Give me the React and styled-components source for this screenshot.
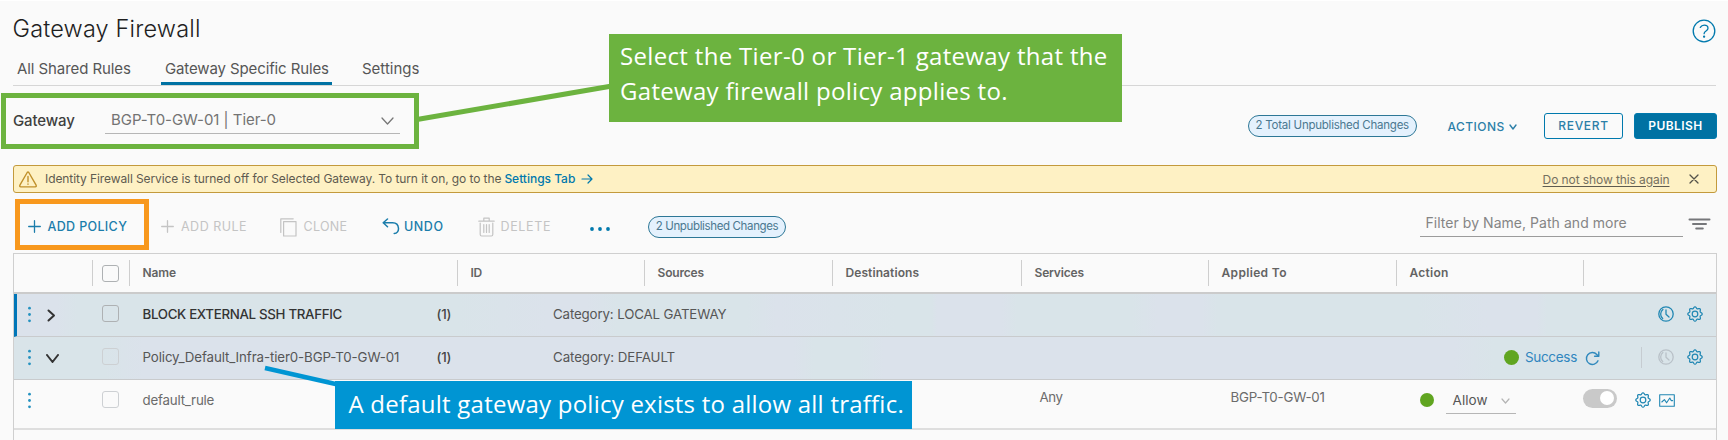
import React from 'react';
import styled, { createGlobalStyle } from 'styled-components';

const blue = '#0079ad';
const GlobalStyle = createGlobalStyle`
  *, *::before, *::after { box-sizing: border-box; }
  body { margin: 0; background: #fafafa; font-family: Inter, "Liberation Sans", sans-serif; color: #565656; overflow: hidden; }
  svg { display: block; flex: none; }
  button { font: inherit; background: none; border: 0; padding: 0; margin: 0; }
`;

const Page = styled.main`
  position: relative;
  width: 1728px;
  height: 440px;
  overflow: hidden;
  border-top: 1px solid #fff;
  padding: 0 11px 0 13px;
  display: flex;
  flex-direction: column;
`;
const Text = styled.span`
  font-size: ${p => p.$size || 13.3}px;
  font-weight: ${p => p.$weight || 400};
  letter-spacing: ${p => p.$ls || 0}px;
  line-height: 20px;
  margin: ${p => p.$margin || 0};
  color: ${p => p.$color || 'inherit'};
  white-space: pre;
`;
const Header = styled.header`
  display: flex;
  justify-content: space-between;
  align-items: flex-start;
  height: 56px;
`;
const Title = styled.h1`
  margin: 12px 0 0 -0.5px;
  font-size: 23.5px;
  font-weight: 300;
  letter-spacing: 0.17px;
  line-height: 31px;
  color: #1f1f1f;
`;
const HelpButton = styled.button`
  margin: 18px 1px 0 0;
`;
const Tabs = styled.nav`
  display: flex;
  height: 29px;
  width: 1703px;
  border-bottom: 1px solid #d6d6d6;
`;
const Tab = styled.div`
  width: ${p => p.$width}px;
  margin-left: ${p => p.$gap}px;
  height: 28px;
  padding: 1px 0 0 4px;
  border-bottom: 3px solid ${p => (p.$active ? '#0072a3' : 'transparent')};
`;
const GatewayBar = styled.section`
  display: flex;
  height: 79px;
`;
const GatewayLabel = styled.label`
  width: 92px;
  padding-top: 24px;
  line-height: 20px;
`;
const Select = styled.div`
  display: flex;
  justify-content: space-between;
  align-items: flex-start;
  width: ${p => p.$width}px;
  height: ${p => p.$height}px;
  padding: ${p => p.$pad};
  border-bottom: 1px solid #b6b6b6;
`;
const SelectCaret = styled.div`
  padding-top: ${p => p.$drop}px;
`;
const PublishActions = styled.div`
  display: flex;
  align-items: center;
  height: 26px;
  margin: 27px 0 0 auto;
`;
const Badge = styled.div`
  display: flex;
  align-items: center;
  justify-content: center;
  width: ${p => p.$width}px;
  height: 22px;
  padding-bottom: 2px;
  border: 1px solid #2d7796;
  border-radius: 11px;
  background: #e4f1fd;
  color: #4b7890;
`;
const MenuButton = styled.button`
  display: flex;
  align-items: center;
  gap: 4px;
  margin: 2px 0 0 31px;
  width: 96.5px;
  color: #2c7fa8;
`;
const Button = styled.button`
  display: flex;
  align-items: center;
  justify-content: center;
  height: 26px;
  width: ${p => p.$width}px;
  margin-right: ${p => (p.$solid ? 0 : 11)}px;
  border: 1px solid #0079ad;
  border-radius: 3px;
  background: ${p => (p.$solid ? '#0072a3' : 'transparent')};
  color: ${p => (p.$solid ? '#fff' : '#2c7fa8')};
`;
const Banner = styled.div`
  display: flex;
  align-items: center;
  width: 1704px;
  height: 28px;
  padding: 0 17px 0 5px;
  border: 1px solid #c39a3c;
  border-radius: 3px;
  background: #fef1c4;
  color: #5e5b50;
`;
const Dismiss = styled.a`
  margin-left: auto;
  margin-right: 19.5px;
  text-decoration: underline;
  text-underline-offset: 2px;
  line-height: 20px;
`;
const Toolbar = styled.div`
  display: flex;
  height: 60px;
  padding-top: 24px;
`;
const Tool = styled.button`
  display: flex;
  align-items: center;
  height: 20px;
  width: ${p => p.$width}px;
  margin-left: ${p => p.$left || 0}px;
  gap: ${p => p.$gap}px;
  color: ${p => (p.$disabled ? '#c4c4c4' : '#1b7dab')};
  & > svg { margin-bottom: ${p => p.$lift || 0}px; }
`;
const ToolbarBadge = styled.div`
  margin-top: -1px;
`;
const Filter = styled.div`
  width: 263px;
  height: 27px;
  margin: -7px 0 0 auto;
  padding: 2px 0 0 6px;
  border-bottom: 1px solid #9b9b9b;
`;
const FilterButton = styled.button`
  align-self: flex-start;
  margin: 1px 6px 0 5.5px;
`;
const Table = styled.section`
  width: 1704px;
  flex: 1;
  border: 1px solid #cfcfcf;
  border-bottom: 0;
`;
const HeaderRow = styled.div`
  display: flex;
  align-items: center;
  height: 40px;
  border-bottom: 2px solid #cbcbcb;
`;
const HeaderCell = styled.div`
  display: flex;
  align-items: center;
  width: ${p => p.$width}px;
  height: 26px;
  padding: 0 0 0 ${p => (p.$check ? 9 : 12.5)}px;
  border-left: ${p => (p.$first ? 0 : 1)}px solid #cecece;
  color: #636363;
`;
const Checkbox = styled.div`
  width: 17px;
  height: 17px;
  margin-top: ${p => p.$drop || 0}px;
  border: 1px solid ${p => (p.$faint ? '#cdd0d3' : '#aeb1b3')};
  border-radius: 3px;
`;
const teal = '#d9e4e9';
const violet = '#dbe2eb';
const policyTints = {
  first: `linear-gradient(90deg, ${violet} 40px, ${teal} 60px 440px, ${violet} 530px 570px, ${teal} 600px 730px, ${violet} 760px, ${teal} 880px 915px, ${violet} 920px 985px, ${teal} 1000px 1115px, ${violet} 1140px 1185px, ${teal} 1200px 1400px, ${violet} 1470px 1520px, ${teal} 1530px)`,
  second: `linear-gradient(90deg, ${teal} 90px, ${violet} 130px 780px, ${teal} 800px 845px, ${violet} 870px 1440px, ${teal} 1480px)`,
};
const PolicyRow = styled.div`
  display: grid;
  grid-template-columns: 20px 55px 40.5px 294px 116.5px 1fr auto;
  align-items: center;
  height: 43px;
  padding: 0 13px 2px ${p => (p.$selected ? 10 : 13)}px;
  border-left: ${p => (p.$selected ? 3 : 0)}px solid #0076b8;
  border-bottom: 1px solid #c9cbcd;
  background: ${p => policyTints[p.$tint]};
`;
const Expander = styled.div`
  padding: 2px 0 0 ${p => (p.$collapsed ? 1 : 0)}px;
  margin-left: -1px;
`;
const RowTools = styled.div`
  display: flex;
  align-items: center;
`;
const ToolPair = styled.div`
  display: flex;
  align-items: center;
  gap: ${p => p.$gap}px;
`;
const Status = styled.div`
  display: flex;
  align-items: center;
  gap: 6px;
  margin-right: 41px;
  & > svg { margin: 2px 0 0 2px; }
`;
const Dot = styled.span`
  width: ${p => p.$size}px;
  height: ${p => p.$size}px;
  border-radius: 50%;
  background: #60a520;
`;
const Divider = styled.span`
  width: 1px;
  height: 21px;
  margin-right: 16px;
  background: #c6ccd1;
`;
const RuleRow = styled.div`
  display: grid;
  grid-template-columns: 75px 40.5px 897px 191px 189px auto;
  align-items: center;
  height: 50px;
  padding: 0 0 8px 13px;
  border-bottom: 2px solid #dedede;
`;
const RuleAction = styled.div`
  display: flex;
  align-items: center;
`;
const AllowSelect = styled(Select)`
  margin: 3px 67px 0 12px;
`;
const Toggle = styled.div`
  display: flex;
  justify-content: flex-end;
  width: 34px;
  height: 19px;
  margin: -4px 18px 0 0;
  padding: 2.5px;
  border-radius: 10px;
  background: #c9c9c9;
  &::after { content: ""; width: 14px; height: 14px; border-radius: 50%; background: #fff; }
`;
const Highlight = styled.div`
  position: absolute;
  left: ${p => p.$x}px;
  top: ${p => p.$y}px;
  width: ${p => p.$w}px;
  height: ${p => p.$h}px;
  border: 5px solid ${p => p.$color};
`;
const Callout = styled.div`
  position: absolute;
  left: ${p => p.$x}px;
  top: ${p => p.$y}px;
  width: ${p => p.$w}px;
  height: ${p => p.$h}px;
  padding: ${p => p.$pad};
  background: ${p => p.$color};
  color: #fff;
  font-family: "Open Sans", sans-serif;
  font-size: 24px;
  line-height: 35px;
  white-space: nowrap;
`;
const CalloutLine = styled.div`
  letter-spacing: ${p => p.$ls}px;
`;
const Connectors = styled.svg`
  position: absolute;
  left: 0;
  top: -1px;
  pointer-events: none;
`;

const Icon = ({ w, h, color = 'currentColor', sw = 1.2, children }) => (
  <svg width={w} height={h} viewBox={`0 0 ${w} ${h}`} fill="none" stroke={color} strokeWidth={sw} strokeLinecap="round" strokeLinejoin="round">{children}</svg>
);
const Help = () => (
  <Icon w={24} h={24} color={blue} sw={1.3}>
    <circle cx="12" cy="12" r="10.8" />
    <path d="M8.3 8.4C9.2 6.9 10.5 6.2 12.2 6.2c2.3 0 3.8 1.2 3.8 3.1 0 2.8-3.9 2.6-3.9 5.4" />
    <circle cx="12.1" cy="17.7" r=".5" fill={blue} />
  </Icon>
);
const Down = ({ w, h, color, sw }) => <Icon w={w} h={h} color={color} sw={sw}><path d={`M1 1L${w / 2} ${h - 1}L${w - 1} 1`} /></Icon>;
const Right = () => <Icon w={9} h={13} color="#333" sw={2}><path d="M1.5 1.5L7 6.5L1.5 11.5" /></Icon>;
const Warning = () => (
  <Icon w={18} h={17} color="#c0902b" sw={1.4}>
    <path d="M8.2 1.5L.9 14.2q-.6 1.5.9 1.7h14.4q1.5-.2.9-1.7L9.8 1.5q-.8-1.1-1.6 0z" />
    <path d="M9 5.5v5.2M9 13v.2" />
  </Icon>
);
const Arrow = () => <Icon w={12} h={10} color={blue}><path d="M1 5h10M7 1l4 4-4 4" /></Icon>;
const Close = () => <Icon w={10} h={10} color="#55534a" sw={1.3}><path d="M1 1l8 8M9 1L1 9" /></Icon>;
const Plus = () => <Icon w={13} h={13} sw={1.3}><path d="M6.5 .7v11.6M.7 6.5h11.6" /></Icon>;
const Copy = () => <Icon w={17} h={19}><path d="M.8 14.5V.8h12.4" /><path d="M3.6 3.6h12.4v14.4H3.6z" /></Icon>;
const Undo = () => <Icon w={18} h={17} sw={1.5}><path d="M5.5 1L1.2 4.8l4.3 4M1.5 4.8h9.2c7.4 0 7.5 10.8 1.5 10.8" /></Icon>;
const Trash = () => <Icon w={17} h={20}><path d="M.8 4.2h15.4M5.8 4V1.2h5.4V4M2.2 6v11.5q0 1.5 1.5 1.5h9.6q1.5 0 1.5-1.5V6M5.8 7.5v8M8.5 7.5v8M11.2 7.5v8" /></Icon>;
const More = () => <svg width="20" height="4" viewBox="0 0 20 4" fill={blue}><circle cx="2" cy="2" r="1.9" /><circle cx="10" cy="2" r="1.9" /><circle cx="18" cy="2" r="1.9" /></svg>;
const FilterIcon = () => <Icon w={23} h={12} color="#76777a" sw={2}><path d="M1.5 1.5h20M5 6h13M8.2 10.4h6.6" /></Icon>;
const Kebab = () => <svg width="5" height="17" viewBox="0 0 5 17" fill="#2592c0"><circle cx="2.5" cy="2.2" r="1.4" /><circle cx="2.5" cy="8.5" r="1.4" /><circle cx="2.5" cy="14.8" r="1.4" /></svg>;
const Clock = ({ color = '#2187b3' }) => (
  <Icon w={16} h={16} color={color} sw={1.3}>
    <circle cx="8" cy="8" r="7.2" /><path d="M8 4v4.3l3 2.7" /><path d="M4.7 12.5a5.8 5.8 0 0 1 .2-9" />
  </Icon>
);
const gearPath = (() => {
  let d = '';
  for (let i = 0; i <= 64; i++) {
    const t = (i / 64) * Math.PI * 2;
    const r = 6.4 + 0.85 * Math.cos(8 * t);
    d += `${i ? 'L' : 'M'}${(8 + r * Math.sin(t)).toFixed(2)} ${(8 - r * Math.cos(t)).toFixed(2)}`;
  }
  return d + 'Z';
})();
const Gear = () => <Icon w={16} h={16} color="#2187b3" sw={1.2}><path d={gearPath} /><circle cx="8" cy="8" r="2.8" /></Icon>;
const Refresh = () => <Icon w={15} h={15} color="#3089bd" sw={1.4}><path d="M13 9.8A6 6 0 1 1 11.8 3.4L13.6 5M13.8 1v4.2H9.6" /></Icon>;
const Chart = () => <Icon w={16} h={13} color="#2187b3" sw={1.1}><path d="M.7.7h14.6v11.6H.7z" /><path d="M2.8 8l2.6-2.4 2.2 3.2L10.8 4l1.4 2.6h1.4" /></Icon>;

const columns = [
  ['Name', 328, -0.1], ['ID', 187, -0.3], ['Sources', 188, -0.17], ['Destinations', 189, 0.09],
  ['Services', 187, -0.16], ['Applied To', 188, 0.34], ['Action', 187, 0.25], ['', 132, 0],
];

export default function App() {
  return (
    <Page>
      <GlobalStyle />
      <Header>
        <Title>Gateway Firewall</Title>
        <HelpButton aria-label="Help"><Help /></HelpButton>
      </Header>
      <Tabs>
        <Tab $width={118} $gap={0}><Text $size={15} $ls={-0.08}>All Shared Rules</Text></Tab>
        <Tab $width={171} $gap={30} $active><Text $size={15} $ls={-0.12}>Gateway Specific Rules</Text></Tab>
        <Tab $width={66} $gap={26}><Text $size={15} $ls={0}>Settings</Text></Tab>
      </Tabs>
      <GatewayBar>
        <GatewayLabel><Text $size={15} $weight={500} $ls={-0.12} $color="#3f3f3f">Gateway</Text></GatewayLabel>
        <Select $width={295} $height={48} $pad="24px 6px 0 6px">
          <Text $size={15} $ls={-0.04} $color="#737373">BGP-T0-GW-01 | Tier-0</Text>
          <SelectCaret $drop={7}><Down w={13} h={8} color="#777" sw={1.3} /></SelectCaret>
        </Select>
        <PublishActions>
          <Badge $width={168.5}><Text $size={11.5} $ls={-0.24}>2 Total Unpublished Changes</Text></Badge>
          <MenuButton><Text $size={12} $weight={500} $ls={0.46}>ACTIONS</Text><Down w={8} h={6} sw={1.4} /></MenuButton>
          <Button $width={79}><Text $size={12} $weight={500} $ls={0.69}>REVERT</Text></Button>
          <Button $width={83} $solid><Text $size={12} $weight={600} $ls={0.44}>PUBLISH</Text></Button>
        </PublishActions>
      </GatewayBar>
      <Banner>
        <Warning />
        <Text $size={12} $ls={-0.09} $margin="0 0 0 8px">Identity Firewall Service is turned off for Selected Gateway. To turn it on, go to the</Text>
        <Text $size={12} $weight={500} $ls={-0.02} $color={blue} $margin="0 6px 0 3px">Settings Tab</Text>
        <Arrow />
        <Dismiss><Text $size={12} $ls={-0.09} $color="#75705f">Do not show this again</Text></Dismiss>
        <Close />
      </Banner>
      <Toolbar>
        <Tool $width={133} $left={15} $gap={6.5} $lift={2}><Plus /><Text $size={12.5} $weight={500} $ls={0.35}>ADD POLICY</Text></Tool>
        <Tool $width={119} $gap={7} $lift={2} $disabled><Plus /><Text $size={12.5} $ls={0.49}>ADD RULE</Text></Tool>
        <Tool $width={102} $gap={6.5} $disabled><Copy /><Text $size={12.5} $ls={0.3}>CLONE</Text></Tool>
        <Tool $width={96} $gap={4} $lift={2}><Undo /><Text $size={12.5} $weight={500} $ls={0.55}>UNDO</Text></Tool>
        <Tool $width={112} $gap={5.5} $disabled><Trash /><Text $size={12.5} $ls={0.65}>DELETE</Text></Tool>
        <Tool $width={58} $gap={0} $lift={-3}><More /></Tool>
        <ToolbarBadge><Badge $width={138}><Text $size={11.5} $ls={-0.36}>2 Unpublished Changes</Text></Badge></ToolbarBadge>
        <Filter><Text $size={14} $ls={0.04} $color="#858585">Filter by Name, Path and more</Text></Filter>
        <FilterButton aria-label="Filter"><FilterIcon /></FilterButton>
      </Toolbar>
      <Table>
        <HeaderRow>
          <HeaderCell $width={78} $first />
          <HeaderCell $width={37} $check><Checkbox $drop={1} /></HeaderCell>
          {columns.map(([label, width, ls], i) => (
            <HeaderCell key={i} $width={width}><Text $size={12} $weight={600} $ls={ls}>{label}</Text></HeaderCell>
          ))}
        </HeaderRow>
        <PolicyRow $tint="first" $selected>
          <Kebab />
          <Expander $collapsed><Right /></Expander>
          <Checkbox $drop={-1} />
          <Text $weight={500} $ls={-0.31} $color="#333">BLOCK EXTERNAL SSH TRAFFIC</Text>
          <Text $weight={500} $ls={-0.2} $color="#444">(1)</Text>
          <Text $ls={-0.14}>Category: LOCAL GATEWAY</Text>
          <RowTools><ToolPair $gap={13}><Clock /><Gear /></ToolPair></RowTools>
        </PolicyRow>
        <PolicyRow $tint="second">
          <Kebab />
          <Expander><Down w={13} h={9} color="#333" sw={2} /></Expander>
          <Checkbox $drop={-1} $faint />
          <Text $ls={-0.11}>Policy_Default_Infra-tier0-BGP-T0-GW-01</Text>
          <Text $weight={500} $ls={-0.2} $color="#444">(1)</Text>
          <Text $ls={-0.08}>Category: DEFAULT</Text>
          <RowTools>
            <Status><Dot $size={15} /><Text $size={13.5} $ls={-0.3} $color="#3086bf">Success</Text><Refresh /></Status>
            <Divider />
            <ToolPair $gap={13}><Clock color="#b9c1c8" /><Gear /></ToolPair>
          </RowTools>
        </PolicyRow>
        <RuleRow>
          <Kebab />
          <Checkbox $drop={-1} $faint />
          <Text $ls={-0.2} $color="#6b6b6b">default_rule</Text>
          <Text $ls={-0.42} $color="#6b6b6b" $margin="-6px 0 0">Any</Text>
          <Text $ls={-0.19} $color="#6b6b6b" $margin="-6px 0 0">BGP-T0-GW-01</Text>
          <RuleAction>
            <Dot $size={14} />
            <AllowSelect $width={70} $height={24} $pad="0 6px 0 7px">
              <Text $size={13.5} $ls={0.07}>Allow</Text>
              <SelectCaret $drop={8}><Down w={9} h={6} color="#b4b4b4" /></SelectCaret>
            </AllowSelect>
            <Toggle />
            <ToolPair $gap={8}><Gear /><Chart /></ToolPair>
          </RuleAction>
        </RuleRow>
      </Table>

      <Connectors width="1728" height="440" viewBox="0 0 1728 440">
        <path d="M417 119.5L612 86" stroke="#6cb33f" strokeWidth="5" />
        <path d="M265 368L340 385" stroke="#0095d3" strokeWidth="4.5" />
      </Connectors>
      <Highlight $x={1} $y={92} $w={418} $h={56} $color="#6cb33f" />
      <Highlight $x={15} $y={198} $w={134} $h={51} $color="#f8981d" />
      <Callout $x={609} $y={33} $w={513} $h={88} $pad="4px 11px" $color="#6cb33f">
        <CalloutLine $ls={0.33}>Select the Tier-0 or Tier-1 gateway that the</CalloutLine>
        <CalloutLine $ls={0.31}>Gateway firewall policy applies to.</CalloutLine>
      </Callout>
      <Callout $x={335} $y={380} $w={577} $h={48} $pad="5px 13.5px" $color="#0095d3">
        <CalloutLine $ls={0.23}>A default gateway policy exists to allow all traffic.</CalloutLine>
      </Callout>
    </Page>
  );
}
